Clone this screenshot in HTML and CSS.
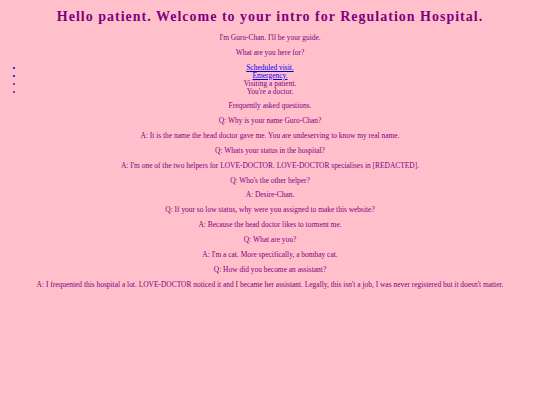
FILE: index.html
```html
<!DOCTYPE html>
<html>
<head>
<meta charset="utf-8">
<title>Regulation Hospital</title>
<link rel="stylesheet" href="styles.css">
</head>
<body>
<h1 class="title">Hello patient. Welcome to your intro for Regulation Hospital.</h1>
<p>I'm Guro-Chan. I'll be your guide.</p>
<p>What are you here for?</p>
<ul class="choices">
  <li class="link-item"><a href="#">Scheduled visit.</a></li>
  <li class="link-item"><a href="#">Emergency.</a></li>
  <li>Visiting a patient.</li>
  <li>You're a doctor.</li>
</ul>
<p>Frequently asked questions.</p>
<p>Q: Why is your name Guro-Chan?</p>
<p>A: It is the name the head doctor gave me. You are undeserving to know my real name.</p>
<p>Q: Whats your status in the hospital?</p>
<p>A: I'm one of the two helpers for LOVE-DOCTOR. LOVE-DOCTOR specialises in [REDACTED].</p>
<p>Q: Who's the other helper?</p>
<p>A: Desire-Chan.</p>
<p>Q: If your so low status, why were you assigned to make this website?</p>
<p>A: Because the head doctor likes to torment me.</p>
<p>Q: What are you?</p>
<p>A: I'm a cat. More specifically, a bombay cat.</p>
<p>Q: How did you become an assistant?</p>
<p>A: I frequented this hospital a lot. LOVE-DOCTOR noticed it and I became her assistant. Legally, this isn't a job, I was never registered but it doesn't matter.</p>
</body>
</html>
```
FILE: styles.css
```css
html {
  background: #ffc0cb;
}
body {
  margin: 0;
  padding: 0 8px 8px;
  background: #ffc0cb;
  color: #800080;
  font-family: "Liberation Serif", serif;
  font-size: 7.45px;
  line-height: 8px;
  text-align: center;
}
.title {
  font-size: 14px;
  line-height: 15px;
  letter-spacing: 1px;
  margin: 9px 0 9.85px;
}
p {
  margin: 6.85px 0;
}
.choices {
  margin: 6.85px 0;
  padding: 0 16px;
}
.link-item {
  color: #0000ee;
}
.link-item a {
  color: #0000ee;
}
```
